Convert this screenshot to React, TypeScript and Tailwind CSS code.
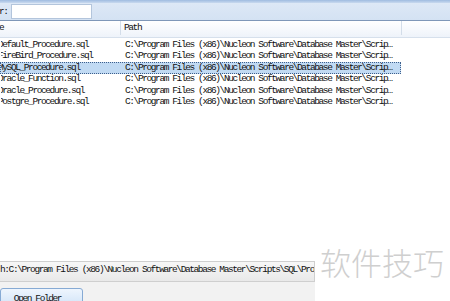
const files = [
  "Default_Procedure.sql",
  "FireBird_Procedure.sql",
  "MySQL_Procedure.sql",
  "Oracle_Function.sql",
  "Oracle_Procedure.sql",
  "Postgre_Procedure.sql",
];

const SCRIPT_PATH = "C:\\Program Files (x86)\\Nucleon Software\\Database Master\\Scrip…";
const FULL_PATH = "h:C:\\Program Files (x86)\\Nucleon Software\\Database Master\\Scripts\\SQL\\Procedures";

function FileRow({ name, selected }: { name: string; selected: boolean }) {
  return (
    <div
      className={`h-[11.5px] w-[401px] flex items-center whitespace-nowrap border border-dotted ${
        selected ? "bg-[#c1daf3] border-[#3d5f8c]" : "border-transparent"
      }`}
    >
      <span className="w-[120px] shrink-0 overflow-hidden">
        <span className="block ml-[-3px]">{name}</span>
      </span>
      <span className="flex-1 overflow-hidden pl-[4px]">{SCRIPT_PATH}</span>
    </div>
  );
}

export default function App() {
  return (
    <div className="relative w-[450px] h-[301px] overflow-hidden bg-white flex flex-col font-['Liberation_Mono',monospace] text-[9.5px] tracking-[-1.4px] text-[#111]">
      {/* top band + filter bar */}
      <div className="h-[3px] bg-gradient-to-b from-[#9fbbe0] to-[#c9daef]" />
      <div className="h-[18px] flex items-center bg-gradient-to-b from-[#dde8f6] to-[#d4e2f3] border-b border-[#7f97b8]">
        <span className="w-[12px] ml-[-1px] pt-[1px]">r:</span>
        <div className="w-[81px] h-[15px] bg-white border border-[#b3c5dc]" />
      </div>

      {/* column header */}
      <div className="h-[17px] flex items-end pb-[2px] bg-gradient-to-b from-white to-[#eef3fa] border-b border-[#d6e0ec] whitespace-nowrap">
        <div className="w-[121px] h-full flex items-end overflow-hidden border-r border-[#d3dde9]">
          <span className="ml-[-14px]">Name</span>
        </div>
        <div className="w-[281px] h-full flex items-end pl-[3px] border-r border-[#d3dde9]">Path</div>
      </div>

      {/* rows */}
      <div className="flex flex-col pt-[1px]">
        {files.map((f, i) => (
          <FileRow key={f} name={f} selected={i === 2} />
        ))}
      </div>

      <div className="flex-1" />

      {/* bottom */}
      <div className="flex">
        <div className="w-[315px] flex flex-col bg-[#f2f2f2]">
          <div className="h-[21px] bg-gradient-to-b from-[#f7f7f7] to-[#e9e9e9] border-y border-r border-[#cfcfcf] whitespace-nowrap overflow-hidden pt-[1px]">
            {FULL_PATH}
          </div>
          <div className="h-[19px] pt-[6px]">
            <div className="w-[83px] h-[20px] rounded-t-[3px] border border-[#86aad4] bg-gradient-to-b from-[#eef5fd] to-[#cfe2f7] flex justify-center pt-[3px] pr-[8px]">
              Open Folder
            </div>
          </div>
        </div>
        <div className="flex-1 bg-white" />
      </div>

      {/* watermark */}
      <div className="absolute left-[320px] top-[246px] text-[31px] leading-none tracking-normal text-[#cfcfcf] font-['Noto_Sans_CJK_SC',sans-serif] font-light">
        软件技巧
      </div>
    </div>
  );
}
